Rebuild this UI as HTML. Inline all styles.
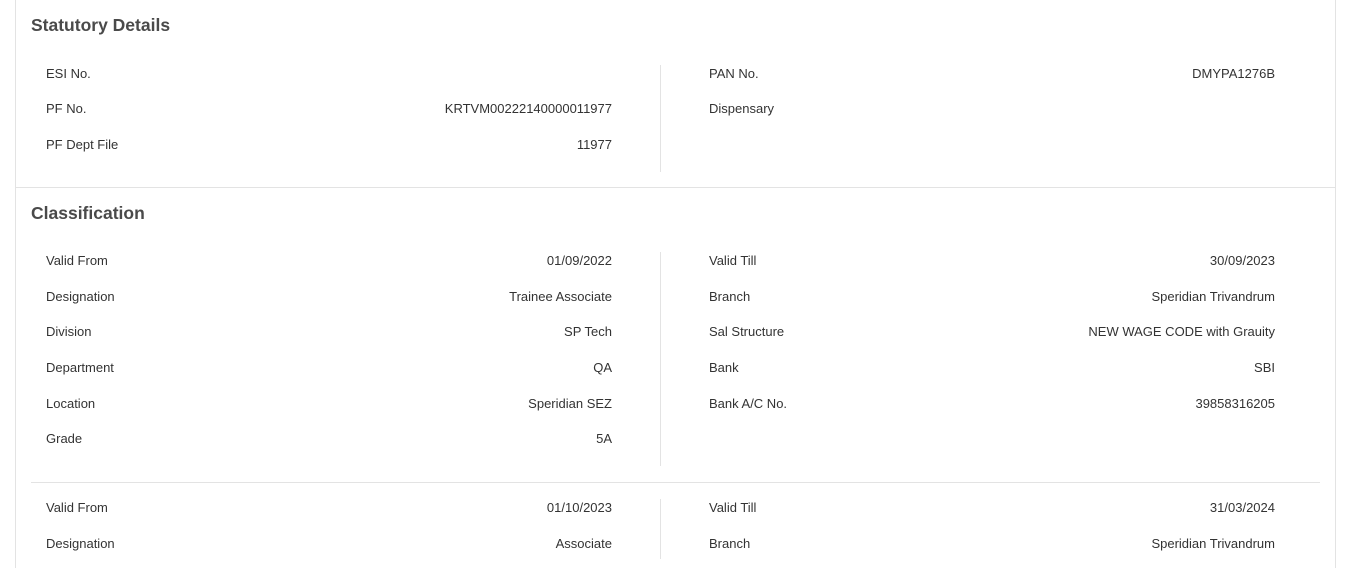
<!DOCTYPE html>
<html><head><meta charset="utf-8"><style>
html,body{margin:0;padding:0;background:#fff;width:1345px;height:557px;overflow:hidden;font-family:"Liberation Sans",sans-serif;color:#333}
.card{position:absolute;left:15px;top:-2px;width:1319px;height:570px;border-left:1px solid #e3e3e3;border-right:1px solid #e3e3e3}
.h{position:absolute;left:31px;font-size:17.5px;font-weight:bold;color:#4a4a4a;line-height:20px}
.t{position:absolute;font-size:13px;line-height:16px;white-space:nowrap;color:#333;margin-top:1px}
.l1{left:46px}.l2{left:709px}
.r1{right:733px;text-align:right}.r2{right:70px;text-align:right}
.hl{position:absolute;height:1px;background:#e3e3e3}
.vl{position:absolute;width:1px;background:#e3e3e3;left:660px}
</style></head><body>
<div class="card"></div>
<div class="h" style="top:15px">Statutory Details</div>
<div class="vl" style="top:65px;height:107px"></div>
<div class="t l1" style="top:65px">ESI No.</div>
<div class="t l2" style="top:65px">PAN No.</div><div class="t r2" style="top:65px">DMYPA1276B</div>
<div class="t l1" style="top:100px">PF No.</div><div class="t r1" style="top:100px">KRTVM00222140000011977</div>
<div class="t l2" style="top:100px">Dispensary</div>
<div class="t l1" style="top:136px">PF Dept File</div><div class="t r1" style="top:136px">11977</div>
<div class="hl" style="top:187px;left:15px;width:1320px"></div>
<div class="h" style="top:203px">Classification</div>
<div class="vl" style="top:252px;height:214px"></div>
<div class="t l1" style="top:252px">Valid From</div><div class="t r1" style="top:252px">01/09/2022</div>
<div class="t l2" style="top:252px">Valid Till</div><div class="t r2" style="top:252px">30/09/2023</div>
<div class="t l1" style="top:288px">Designation</div><div class="t r1" style="top:288px">Trainee Associate</div>
<div class="t l2" style="top:288px">Branch</div><div class="t r2" style="top:288px">Speridian Trivandrum</div>
<div class="t l1" style="top:323px">Division</div><div class="t r1" style="top:323px">SP Tech</div>
<div class="t l2" style="top:323px">Sal Structure</div><div class="t r2" style="top:323px">NEW WAGE CODE with Grauity</div>
<div class="t l1" style="top:359px">Department</div><div class="t r1" style="top:359px">QA</div>
<div class="t l2" style="top:359px">Bank</div><div class="t r2" style="top:359px">SBI</div>
<div class="t l1" style="top:395px">Location</div><div class="t r1" style="top:395px">Speridian SEZ</div>
<div class="t l2" style="top:395px">Bank A/C No.</div><div class="t r2" style="top:395px">39858316205</div>
<div class="t l1" style="top:430px">Grade</div><div class="t r1" style="top:430px">5A</div>
<div class="hl" style="top:482px;left:31px;width:1289px"></div>
<div class="vl" style="top:499px;height:60px"></div>
<div class="t l1" style="top:499px">Valid From</div><div class="t r1" style="top:499px">01/10/2023</div>
<div class="t l2" style="top:499px">Valid Till</div><div class="t r2" style="top:499px">31/03/2024</div>
<div class="t l1" style="top:535px">Designation</div><div class="t r1" style="top:535px">Associate</div>
<div class="t l2" style="top:535px">Branch</div><div class="t r2" style="top:535px">Speridian Trivandrum</div>
</body></html>
